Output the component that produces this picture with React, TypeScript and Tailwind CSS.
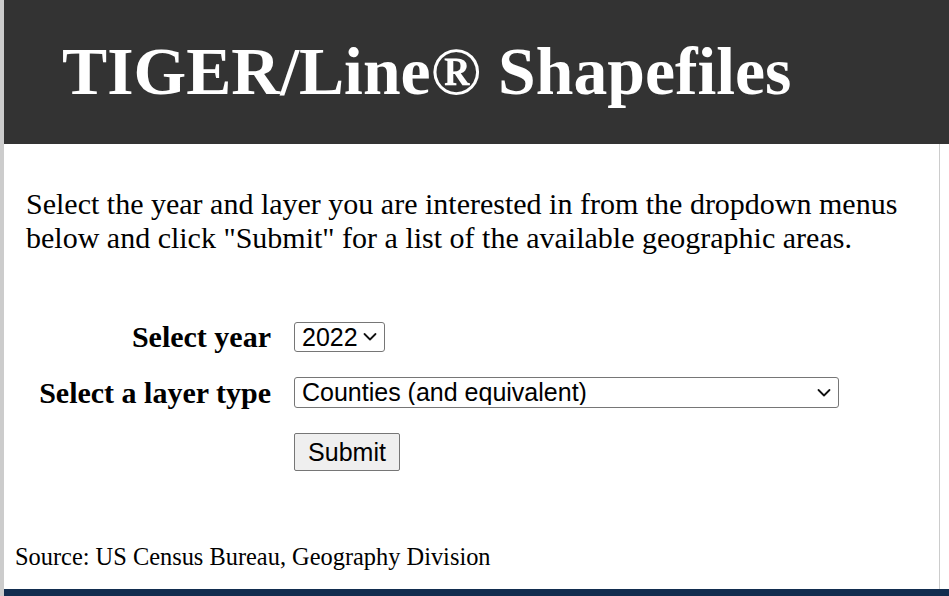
import { useState } from "react"

const serif = "font-['Liberation_Serif','Times_New_Roman',serif]"
const sans = "font-['Liberation_Sans',Arial,sans-serif]"

function Chevron() {
  return (
    <svg width="14" height="9" viewBox="0 0 14 9" className="pointer-events-none absolute top-1/2 right-[8px] -translate-y-1/2">
      <polyline points="1.5,1.5 7,7 12.5,1.5" fill="none" stroke="#111" strokeWidth="1.8" strokeLinecap="round" strokeLinejoin="round" />
    </svg>
  )
}

export default function App() {
  const [year, setYear] = useState("2022")
  const [layer, setLayer] = useState("counties")

  return (
    <div className={`min-h-[596px] w-[949px] overflow-hidden border-l-4 border-[#cccccc] bg-white text-black ${serif}`}>
      {/* Header */}
      <header className="flex h-[144px] items-center bg-[#333333] pl-[58px]">
        <h1 className="text-[67.7px] font-bold leading-none text-white">TIGER/Line® Shapefiles</h1>
      </header>

      <div className="flex h-[445px] w-[936px] flex-col border-r border-[#cccccc]">
        <p className="mt-[43px] pl-[22px] text-[30px] leading-[34px] whitespace-nowrap">
          Select the year and layer you are interested in from the dropdown menus
          <br />
          below and click "Submit" for a list of the available geographic areas.
        </p>

        <form className="mt-[67px] grid grid-cols-[267px_auto] items-center gap-x-[23px] gap-y-[25px]" onSubmit={e => e.preventDefault()}>
          <label className="text-right text-[30px] font-bold leading-none">Select year</label>
          <div className="relative w-[91px]">
            <select
              value={year}
              onChange={e => setYear(e.target.value)}
              className={`block h-[30px] w-full appearance-none rounded-[3px] border border-[#767676] bg-white py-0 pl-[7px] text-[25px] leading-none ${sans}`}
            >
              {["2022", "2021", "2020", "2019", "2018"].map(y => (
                <option key={y}>{y}</option>
              ))}
            </select>
            <Chevron />
          </div>

          <label className="text-right text-[30px] font-bold leading-none">Select a layer type</label>
          <div className="relative w-[545px]">
            <select
              value={layer}
              onChange={e => setLayer(e.target.value)}
              className={`block h-[31px] w-full appearance-none rounded-[3px] border border-[#767676] bg-white py-0 pl-[7px] text-[25px] leading-none ${sans}`}
            >
              <option value="counties">Counties (and equivalent)</option>
              <option value="states">States (and equivalent)</option>
              <option value="tracts">Census Tracts</option>
            </select>
            <Chevron />
          </div>

          <div />
          <div>
            <button
              type="submit"
              className={`block h-[38px] w-[106px] rounded-[2px] border border-[#767676] bg-[#efefef] text-[25px] leading-none ${sans}`}
            >
              Submit
            </button>
          </div>
        </form>

        <p className="mt-auto mb-[20px] pl-[11px] text-[24.4px] leading-none">Source: US Census Bureau, Geography Division</p>
      </div>

      <div className="h-[7px] bg-[#122d4f]" />
    </div>
  )
}
